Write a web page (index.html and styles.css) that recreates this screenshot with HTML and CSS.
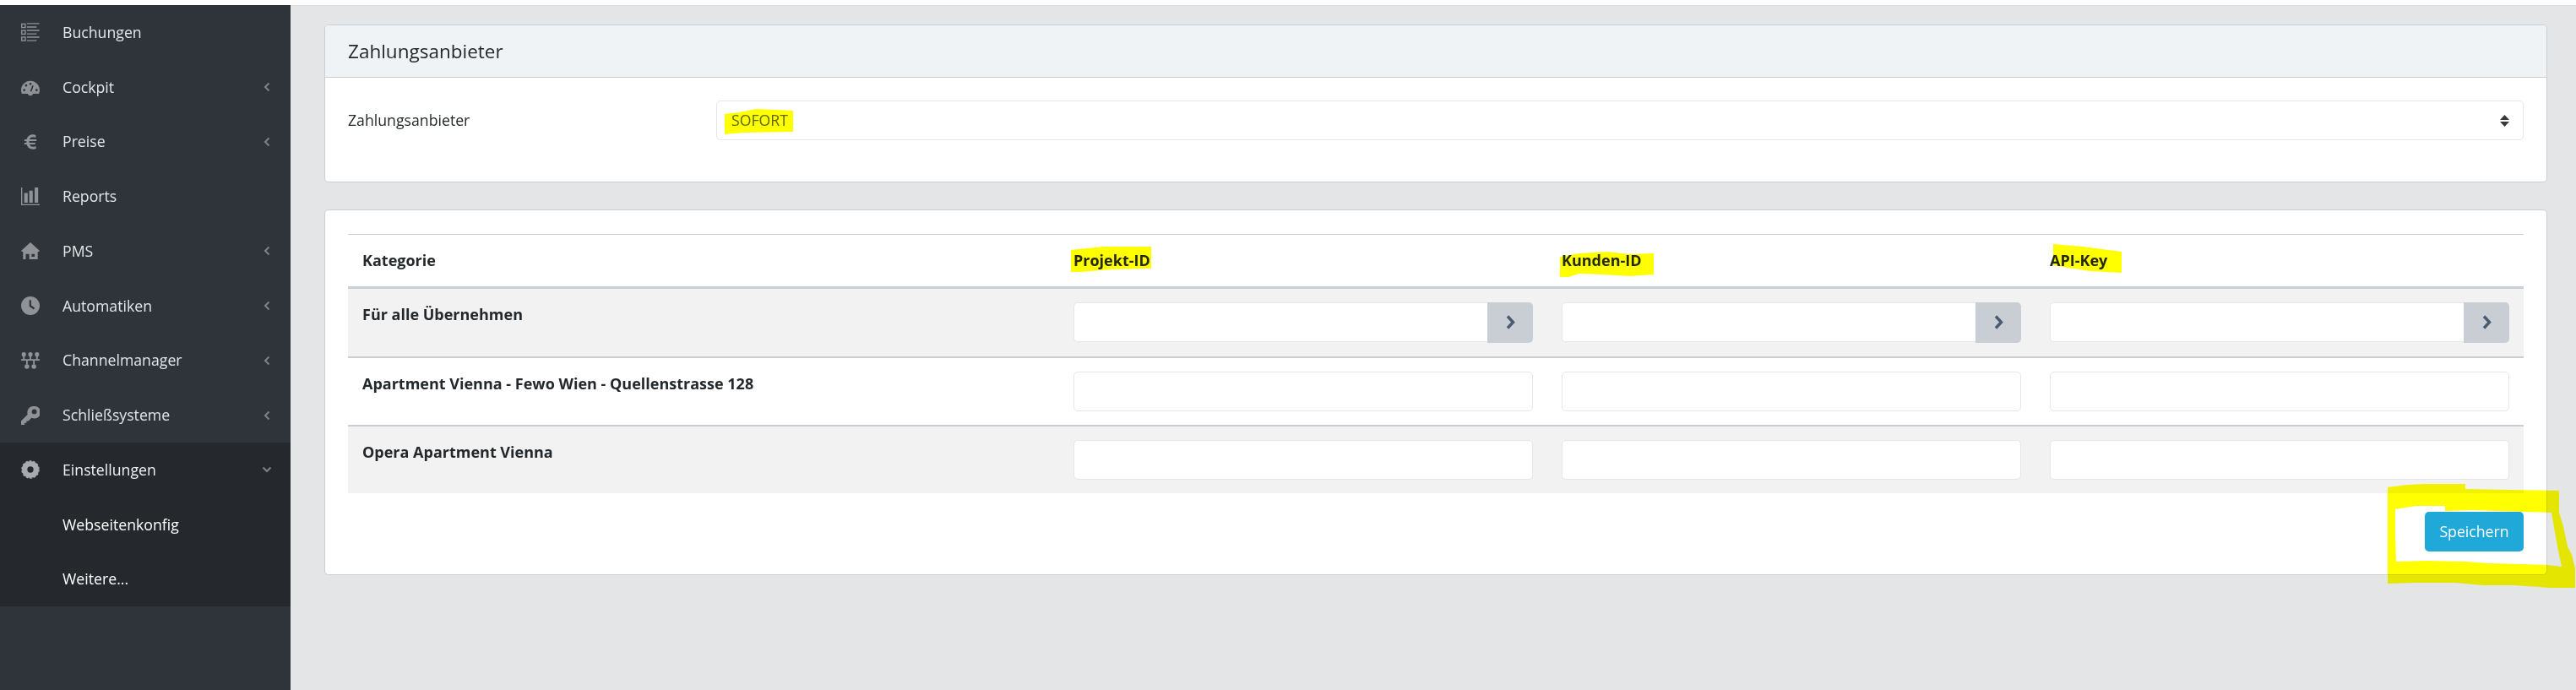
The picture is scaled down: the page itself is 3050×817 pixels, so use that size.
FILE: index.html
```html
<!DOCTYPE html>
<html lang="de">
<head>
<meta charset="utf-8">
<title>Zahlungsanbieter</title>
<link rel="stylesheet" href="styles.css">
</head>
<body>
<div class="app">
  <nav class="sidebar">
    <a class="nav-item">
      <svg class="nav-icon" viewBox="0 0 24 24"><g fill="none" stroke="currentColor" stroke-width="1.5"><rect x=".8" y="1.500" width="4.600" height="4.600"/><rect x=".8" y="10" width="4.600" height="4.600"/><rect x=".8" y="18.500" width="4.600" height="4.600"/><path d="M7.500 1h16M7.500 5.500h12.500M7.500 9.800h16M7.500 14.300h12.500M7.500 18.500h16M7.500 23h12.500"/></g></svg>
      <span class="nav-label">Buchungen</span>
    </a>
    <a class="nav-item">
      <svg class="nav-icon" viewBox="0 0 24 24"><path fill="currentColor" fill-rule="evenodd" d="M12 4C5.400 4 0 9.400 0 16c0 1.700.4 3.300 1 4.800h7.600a3.500 3.500 0 0 0 6.800 0H23c.6-1.500 1-3.100 1-4.800 0-6.600-5.400-12-12-12zM4 17.500a1.500 1.500 0 1 1 0-3 1.500 1.500 0 0 1 0 3zm2.500-6a1.500 1.500 0 1 1 0-3 1.500 1.500 0 0 1 0 3zm5.500-2a1.500 1.500 0 1 1 0-3 1.500 1.500 0 0 1 0 3zm1.400 8.400-1.700-.5 2.800-7.500 1.600.5zM20 17.500a1.500 1.500 0 1 1 0-3 1.500 1.500 0 0 1 0 3z"/></svg>
      <span class="nav-label">Cockpit</span>
      <svg class="nav-caret" viewBox="0 0 8 12"><path d="M6.500 1.500 2 6l4.500 4.500"/></svg>
    </a>
    <a class="nav-item">
      <svg class="nav-icon" viewBox="0 0 24 24"><path fill="currentColor" d="M19 3.200c-1.300-.5-2.600-.7-3.800-.7-4.100 0-7 2.500-8 6.200H4.600l-.8 2.300h3.100v2H4.600l-.8 2.300h3.400c1 3.800 3.900 6.200 8 6.200 1.400 0 2.900-.3 4.100-.8v-3.300c-1.200.6-2.500 1-3.800 1-2.300 0-3.900-1.200-4.600-3.100h7l.8-2.300h-8.200v-2h9l.8-2.300h-9.400c.7-1.800 2.300-2.900 4.400-2.900 1.200 0 2.300.3 3.500.8z"/></svg>
      <span class="nav-label">Preise</span>
      <svg class="nav-caret" viewBox="0 0 8 12"><path d="M6.500 1.500 2 6l4.500 4.500"/></svg>
    </a>
    <a class="nav-item">
      <svg class="nav-icon" viewBox="0 0 24 24"><path fill="currentColor" d="M0 0h1.500v21.500H24V23H0zM4 7h4.500v12.500H4zM10.500 4H15v15.500h-4.500zM17.500 0H22v19.500h-4.500z"/></svg>
      <span class="nav-label">Reports</span>
    </a>
    <a class="nav-item">
      <svg class="nav-icon" viewBox="0 0 24 24"><path fill="currentColor" fill-rule="evenodd" d="M12 1 .5 11.500V13h2v10H6v-7h4.500v7h11V13h2v-1.500zM13.500 16h4v3.500h-4z"/></svg>
      <span class="nav-label">PMS</span>
      <svg class="nav-caret" viewBox="0 0 8 12"><path d="M6.500 1.500 2 6l4.500 4.500"/></svg>
    </a>
    <a class="nav-item">
      <svg class="nav-icon" viewBox="0 0 24 24"><path fill="currentColor" fill-rule="evenodd" d="M12 0a12 12 0 1 0 0 24 12 12 0 0 0 0-24zm-1.400 4.500h2.400v7l4.600 3.300-1.400 2-5.600-4z"/></svg>
      <span class="nav-label">Automatiken</span>
      <svg class="nav-caret" viewBox="0 0 8 12"><path d="M6.500 1.500 2 6l4.500 4.500"/></svg>
    </a>
    <a class="nav-item">
      <svg class="nav-icon" viewBox="0 0 24 24"><g fill="currentColor"><circle cx="3.500" cy="4" r="2.800"/><circle cx="12" cy="4" r="2.800"/><circle cx="20.500" cy="4" r="2.800"/><circle cx="7.500" cy="19.500" r="3"/><circle cx="16.500" cy="19.500" r="3"/><path d="M0 10h24v2H0zM2.500 5h2v5h-2zM11 5h2v5h-2zM19.500 5h2v5h-2zM6.500 11h2v6h-2zM15.500 11h2v6h-2z"/></g></svg>
      <span class="nav-label">Channelmanager</span>
      <svg class="nav-caret" viewBox="0 0 8 12"><path d="M6.500 1.500 2 6l4.500 4.500"/></svg>
    </a>
    <a class="nav-item">
      <svg class="nav-icon" viewBox="0 0 24 24"><path fill="currentColor" fill-rule="evenodd" d="M16 0a8 8 0 0 0-7.600 10.500L0 19v5h4.500v-2.500H7L7 19h2.500l4-4A8 8 0 1 0 16 0zm1 3.800a3.200 3.200 0 1 1 0 6.400 3.200 3.200 0 0 1 0-6.400z"/></svg>
      <span class="nav-label">Schließsysteme</span>
      <svg class="nav-caret" viewBox="0 0 8 12"><path d="M6.500 1.500 2 6l4.500 4.500"/></svg>
    </a>
    <div class="nav-group">
      <a class="nav-item nav-open">
        <svg class="nav-icon" viewBox="0 0 24 24"><circle cx="12" cy="12" r="7.500" fill="none" stroke="currentColor" stroke-width="7"/><circle cx="12" cy="12" r="11" fill="none" stroke="currentColor" stroke-width="1.500" stroke-dasharray="3 2"/></svg>
        <span class="nav-label">Einstellungen</span>
        <svg class="nav-caret nav-caret-open" viewBox="0 0 12 8"><path d="M1.500 1.500 6 6l4.500-4.500"/></svg>
      </a>
      <a class="nav-item nav-sub"><span class="nav-label">Webseitenkonfig</span></a>
      <a class="nav-item nav-sub"><span class="nav-label">Weitere...</span></a>
    </div>
  </nav>

  <main class="main">
    <section class="card">
      <h5 class="card-header">Zahlungsanbieter</h5>
      <div class="card-body provider-body">
        <label class="provider-label" for="provider">Zahlungsanbieter</label>
        <div class="select-wrap">
          <select class="control select" id="provider"><option>SOFORT</option></select>
          <svg class="select-arrows" viewBox="0 0 11 14"><path d="M5.500 0 11 6H0zM5.500 14 0 8h11z"/></svg>
        </div>
      </div>
    </section>

    <section class="card">
      <div class="card-body table-body">
        <table class="grid">
          <colgroup><col class="col-cat"><col class="col-val"><col class="col-val"><col class="col-val"></colgroup>
          <thead>
            <tr><th>Kategorie</th><th>Projekt-ID</th><th>Kunden-ID</th><th>API-Key</th></tr>
          </thead>
          <tbody>
            <tr class="striped">
              <th>Für alle Übernehmen</th>
              <td><div class="input-group"><input class="control" type="text"><button class="apply" type="button"><svg viewBox="0 0 11 17"><path d="M2 1.500 8.500 8.500 2 15.500"/></svg></button></div></td>
              <td><div class="input-group"><input class="control" type="text"><button class="apply" type="button"><svg viewBox="0 0 11 17"><path d="M2 1.500 8.500 8.500 2 15.500"/></svg></button></div></td>
              <td><div class="input-group"><input class="control" type="text"><button class="apply" type="button"><svg viewBox="0 0 11 17"><path d="M2 1.500 8.500 8.500 2 15.500"/></svg></button></div></td>
            </tr>
            <tr>
              <th>Apartment Vienna - Fewo Wien - Quellenstrasse 128</th>
              <td><input class="control" type="text"></td>
              <td><input class="control" type="text"></td>
              <td><input class="control" type="text"></td>
            </tr>
            <tr class="striped">
              <th>Opera Apartment Vienna</th>
              <td><input class="control" type="text"></td>
              <td><input class="control" type="text"></td>
              <td><input class="control" type="text"></td>
            </tr>
          </tbody>
        </table>
        <div class="actions"><button class="save" type="button">Speichern</button></div>
      </div>
    </section>
  </main>
</div>

<svg class="marker" viewBox="0 0 3050 817" aria-hidden="true">
  <polygon points="858,135 875,133 896,129 939,131 939,156 881,157 858,159"/>
  <polygon points="1268,296 1307,292 1363,292 1363,318 1316,319 1280,322 1268,322"/>
  <polygon points="1847,304 1870,300 1903,298 1930,301 1958,300 1958,325 1930,327 1897,325 1870,324 1857,328 1847,328"/>
  <polygon points="2431,289 2466,292 2512,298 2512,323 2475,321 2448,317 2431,314"/>
  <path fill-rule="evenodd" d="M2827 577 2850 574 2872 573 2919 573 2919 579 2973 580 3030 581 3030 607 3035 623 3040 647 3045 657 3049 673 3049 696 3020 696 2977 693 2940 693 2907 690 2860 690 2827 691ZM2836 603 2860 599 2895 599 2895 605 2927 604 3021 607 3025 630 3028 647 3033 671 3017 669 2987 668 2947 667 2920 665 2873 664 2837 665 2836 630Z"/>
</svg>
</body>
</html>
```

FILE: styles.css
```css
* { box-sizing: border-box; }

html, body {
  margin: 0;
  height: 100%;
  background: #fff;
  overflow: hidden;
}

body {
  position: relative;
  font-family: "Open Sans", "Noto Sans", sans-serif;
  font-size: 17.7px;
  line-height: 27px;
  color: #23282c;
}

.app {
  display: flex;
  height: 811px;
  margin-top: 6px;
}

/* Sidebar */
.sidebar {
  flex: 0 0 344px;
  background: #2f343b;
  color: #e4e7ea;
}

.nav-item {
  display: flex;
  align-items: center;
  height: 64.75px;
  padding: 0 24px 0 25px;
}

.nav-icon {
  flex: 0 0 22px;
  width: 22px;
  height: 22px;
  color: #8f9296;
}

.nav-label {
  flex: 1;
  margin-left: 27px;
}

.nav-caret {
  flex: 0 0 8px;
  width: 8px;
  height: 12px;
  fill: none;
  stroke: #7f8387;
  stroke-width: 2;
}

.nav-caret-open {
  width: 12px;
  height: 8px;
  flex-basis: 12px;
  margin-right: -2px;
}

.nav-group {
  background: #25282d;
}

.nav-sub {
  color: #fff;
}

.nav-sub .nav-label {
  margin-left: 49px;
}

.nav-open .nav-label {
  color: #f0f2f4;
}

.nav-open .nav-icon {
  color: #a8aaad;
}

/* Main */
.main {
  flex: 1;
  display: flex;
  flex-direction: column;
  gap: 32px;
  padding: 22px 34px 0 40px;
  background: #e4e5e7;
  border-top: 1px solid #d8dadc;
}

.card {
  background: #fff;
  border: 1px solid #c8ced3;
  border-radius: 5px;
}

.card-header {
  margin: 0;
  height: 62px;
  padding: 0 27px;
  display: flex;
  align-items: center;
  background: #f0f3f5;
  border-bottom: 1px solid #c8ced3;
  border-radius: 4px 4px 0 0;
  font-size: 22.5px;
  font-weight: 500;
}

.card-body {
  padding: 28px 27px 27px;
}

.provider-body {
  display: flex;
  align-items: flex-start;
  height: 123px;
  padding-top: 27px;
  padding-bottom: 0;
}

.provider-label {
  flex: 0 0 436px;
  line-height: 47px;
}

.select-wrap {
  position: relative;
  flex: 1;
}

.control {
  display: block;
  width: 100%;
  height: 47px;
  padding: 0 17px;
  border: 1px solid #e4e7ea;
  border-radius: 5px;
  background: #fff;
  font: inherit;
  color: #5c6873;
  outline: none;
}

.select {
  appearance: none;
}

.select-arrows {
  position: absolute;
  top: 17px;
  right: 17px;
  width: 11px;
  height: 14px;
  fill: #343a40;
}

/* Table */
.grid {
  width: 2576px;
  table-layout: fixed;
  border-collapse: separate;
  border-spacing: 0;
}

.col-cat { width: 842px; }
.col-val { width: 578px; }

.grid th {
  text-align: left;
  vertical-align: top;
  padding: 17px 17px 15px;
  font-weight: 700;
  font-size: 18px;
}

.grid td {
  vertical-align: top;
  padding: 16px 17px 16px 17px;
}

.grid thead th {
  height: 65px;
  border-top: 1px solid #c8ced3;
  border-bottom: 3px solid #c8ced3;
}

.grid tbody tr + tr th,
.grid tbody tr + tr td {
  border-top: 2px solid #c8ced3;
}

.striped {
  background: #f2f2f2;
}

.input-group {
  display: flex;
}

.input-group .control {
  flex: 1;
  min-width: 0;
  border-right: 0;
  border-radius: 5px 0 0 5px;
}

.apply {
  flex: 0 0 54px;
  height: 48px;
  padding: 0;
  border: 0;
  border-radius: 0 5px 5px 0;
  background: #c8ced3;
  display: flex;
  align-items: center;
  justify-content: center;
}

.apply svg {
  width: 11px;
  height: 17px;
  fill: none;
  stroke: #4a5a70;
  stroke-width: 3.4;
  margin-top: -2px;
}

.actions {
  display: flex;
  justify-content: flex-end;
  margin-top: 22px;
}

.save {
  width: 117px;
  height: 47px;
  padding: 0;
  border: 0;
  border-radius: 5px;
  background: #20a8d8;
  color: #fff;
  font: inherit;
}

/* Hand-drawn highlighter marks on top of the page */
.marker {
  position: absolute;
  top: 0;
  left: 0;
  width: 3050px;
  height: 817px;
  fill: #ffff00;
  mix-blend-mode: multiply;
  pointer-events: none;
}
```
